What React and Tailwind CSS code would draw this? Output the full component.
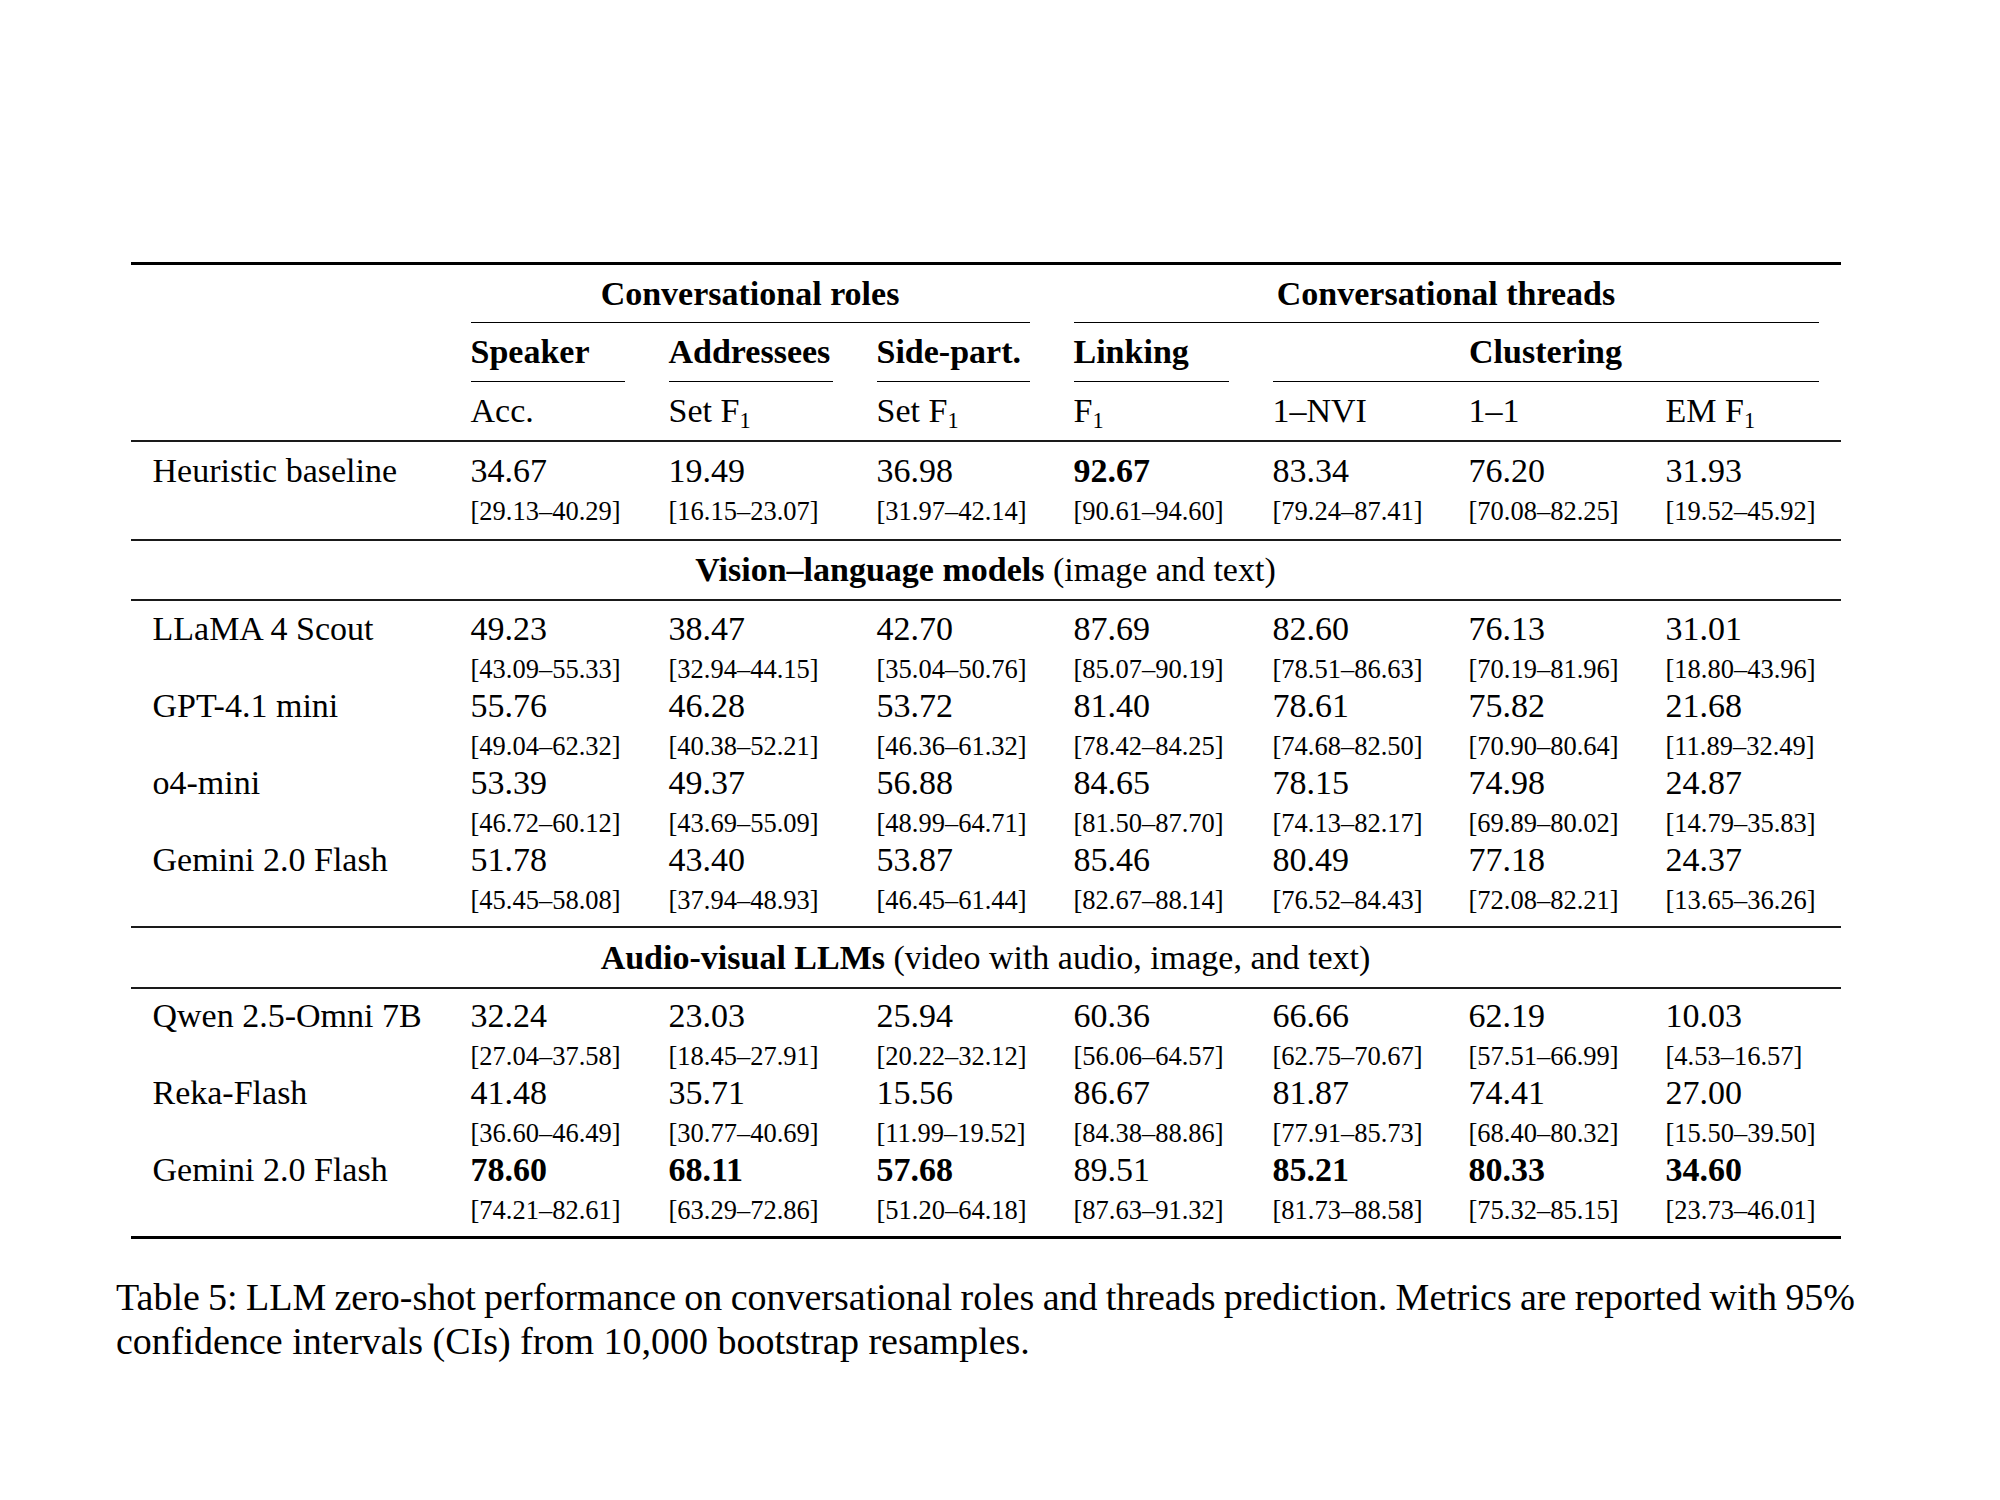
import React from 'react';

const cols = 'grid grid-cols-[318px_198px_208px_197px_199px_196px_197px_197px]';

const heuristic = {
  name: 'Heuristic baseline',
  vals: ['34.67', '19.49', '36.98', '92.67', '83.34', '76.20', '31.93'],
  cis: ['29.13–40.29', '16.15–23.07', '31.97–42.14', '90.61–94.60', '79.24–87.41', '70.08–82.25', '19.52–45.92'],
  bold: [3],
};

const visionModels = [
  {
    name: 'LLaMA 4 Scout',
    vals: ['49.23', '38.47', '42.70', '87.69', '82.60', '76.13', '31.01'],
    cis: ['43.09–55.33', '32.94–44.15', '35.04–50.76', '85.07–90.19', '78.51–86.63', '70.19–81.96', '18.80–43.96'],
    bold: [],
  },
  {
    name: 'GPT-4.1 mini',
    vals: ['55.76', '46.28', '53.72', '81.40', '78.61', '75.82', '21.68'],
    cis: ['49.04–62.32', '40.38–52.21', '46.36–61.32', '78.42–84.25', '74.68–82.50', '70.90–80.64', '11.89–32.49'],
    bold: [],
  },
  {
    name: 'o4-mini',
    vals: ['53.39', '49.37', '56.88', '84.65', '78.15', '74.98', '24.87'],
    cis: ['46.72–60.12', '43.69–55.09', '48.99–64.71', '81.50–87.70', '74.13–82.17', '69.89–80.02', '14.79–35.83'],
    bold: [],
  },
  {
    name: 'Gemini 2.0 Flash',
    vals: ['51.78', '43.40', '53.87', '85.46', '80.49', '77.18', '24.37'],
    cis: ['45.45–58.08', '37.94–48.93', '46.45–61.44', '82.67–88.14', '76.52–84.43', '72.08–82.21', '13.65–36.26'],
    bold: [],
  },
];

const audioModels = [
  {
    name: 'Qwen 2.5-Omni 7B',
    vals: ['32.24', '23.03', '25.94', '60.36', '66.66', '62.19', '10.03'],
    cis: ['27.04–37.58', '18.45–27.91', '20.22–32.12', '56.06–64.57', '62.75–70.67', '57.51–66.99', '4.53–16.57'],
    bold: [],
  },
  {
    name: 'Reka-Flash',
    vals: ['41.48', '35.71', '15.56', '86.67', '81.87', '74.41', '27.00'],
    cis: ['36.60–46.49', '30.77–40.69', '11.99–19.52', '84.38–88.86', '77.91–85.73', '68.40–80.32', '15.50–39.50'],
    bold: [],
  },
  {
    name: 'Gemini 2.0 Flash',
    vals: ['78.60', '68.11', '57.68', '89.51', '85.21', '80.33', '34.60'],
    cis: ['74.21–82.61', '63.29–72.86', '51.20–64.18', '87.63–91.32', '81.73–88.58', '75.32–85.15', '23.73–46.01'],
    bold: [0, 1, 2, 4, 5, 6],
  },
];

function ModelRow({ model }) {
  return (
    <div className={cols}>
      <div className="px-[22px] h-[38px] leading-[38px] whitespace-nowrap">{model.name}</div>
      {model.vals.map((v, i) => (
        <div
          key={'v' + i}
          className={'px-[22px] h-[38px] leading-[38px] ' + (model.bold.includes(i) ? 'font-bold' : '')}
        >
          {v}
        </div>
      ))}
      <div className="h-[39px]" />
      {model.cis.map((c, i) => (
        <div key={'c' + i} className="px-[22px] pt-[4px] h-[39px] leading-[35px] text-[26.5px] whitespace-nowrap">
          [{c}]
        </div>
      ))}
    </div>
  );
}

function Rule({ thick }) {
  return <div className={thick ? 'h-[3px] bg-black' : 'h-[2px] bg-[#1a1a1a]'} />;
}

function CmidLine() {
  return <div className="h-px bg-black" />;
}

// F with a small subscript one
function F1() {
  return (
    <>
      F<sub className="text-[0.66em]">1</sub>
    </>
  );
}

export default function App() {
  return (
    <div className="w-[2000px] h-[1500px] bg-white text-black font-['Liberation_Serif','Times_New_Roman',serif] text-[34px] pt-[262px]">
      <div className="ml-[116px] w-[1739px]">
        <div className="mx-auto w-[1710px]">
          <Rule thick />

          {/* group headers */}
          <div className={cols + ' h-[57px] leading-[57px] font-bold'}>
            <div />
            <div className="col-span-3 text-center">Conversational roles</div>
            <div className="col-span-4 text-center">Conversational threads</div>
          </div>
          <div className={cols + ' h-px'}>
            <div />
            <div className="col-span-3 px-[22px]"><CmidLine /></div>
            <div className="col-span-4 px-[22px]"><CmidLine /></div>
          </div>

          {/* task headers */}
          <div className={cols + ' h-[58px] leading-[58px] font-bold'}>
            <div />
            <div className="px-[22px]">Speaker</div>
            <div className="px-[22px]">Addressees</div>
            <div className="px-[22px]">Side-part.</div>
            <div className="px-[22px]">Linking</div>
            <div className="col-span-3 text-center">Clustering</div>
          </div>
          <div className={cols + ' h-px'}>
            <div />
            <div className="px-[22px]"><CmidLine /></div>
            <div className="px-[22px]"><CmidLine /></div>
            <div className="px-[22px]"><CmidLine /></div>
            <div className="px-[22px]"><CmidLine /></div>
            <div className="col-span-3 px-[22px]"><CmidLine /></div>
          </div>

          {/* metric headers */}
          <div className={cols + ' h-[58px] leading-[58px]'}>
            <div />
            <div className="px-[22px]">Acc.</div>
            <div className="px-[22px]">Set <F1 /></div>
            <div className="px-[22px]">Set <F1 /></div>
            <div className="px-[22px]"><F1 /></div>
            <div className="px-[22px]">1–NVI</div>
            <div className="px-[22px]">1–1</div>
            <div className="px-[22px]">EM <F1 /></div>
          </div>
          <Rule />

          <div className="pt-[9.5px] pb-[10.5px]">
            <ModelRow model={heuristic} />
          </div>
          <Rule />

          <div className="h-[58px] leading-[58px] text-center">
            <span className="font-bold">Vision–language models</span> (image and text)
          </div>
          <Rule />

          <div className="pt-[8.5px] pb-[8.5px]">
            {visionModels.map((m) => (
              <ModelRow key={m.name} model={m} />
            ))}
          </div>
          <Rule />

          <div className="h-[59px] leading-[59px] text-center">
            <span className="font-bold">Audio-visual LLMs</span> (video with audio, image, and text)
          </div>
          <Rule />

          <div className="pt-[7.5px] pb-[8.5px]">
            {audioModels.map((m, i) => (
              <ModelRow key={m.name + i} model={m} />
            ))}
          </div>
          <Rule thick />
        </div>

        <div className="mt-[36px] text-[38px] leading-[44px]">
          <p className="text-justify [text-align-last:justify] [word-spacing:-4px]">
            Table 5: LLM zero-shot performance on conversational roles and threads prediction. Metrics are reported with 95%
          </p>
          <p>confidence intervals (CIs) from 10,000 bootstrap resamples.</p>
        </div>
      </div>
    </div>
  );
}
